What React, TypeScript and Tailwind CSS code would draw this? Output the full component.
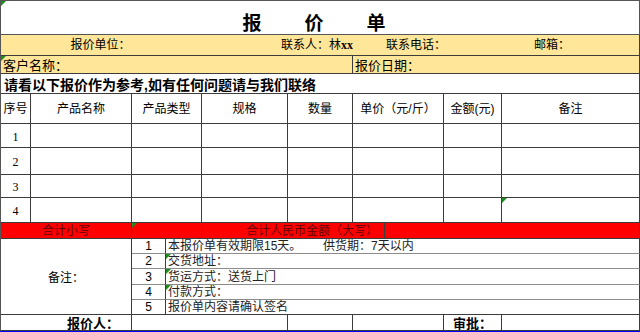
import React from "react";

type Note = { no: number; text: React.ReactNode; flag: boolean; last: boolean };

const NOTES: Note[] = [
  {
    no: 1,
    text: (
      <>
        <span className="inline-block w-[155px]">本报价单有效期限15天。</span>供货期：7天以内
      </>
    ),
    flag: false,
    last: false,
  },
  { no: 2, text: "交货地址：", flag: true, last: false },
  { no: 3, text: "货运方式：送货上门", flag: true, last: false },
  { no: 4, text: "付款方式：", flag: true, last: false },
  { no: 5, text: "报价单内容请确认签名", flag: false, last: true },
];

// base cell: right + bottom grid lines, the table itself draws top + left
const cell = "flex items-center justify-center border-r border-b border-[#3c3c3c] text-[12px] leading-none whitespace-nowrap";

function Flag() {
  return (
    <span className="absolute left-0 top-0 h-0 w-0 border-t-[5px] border-r-[5px] border-t-[#1e8c1e] border-r-transparent" />
  );
}

export default function App() {
  return (
    <div className="w-[640px] h-[332px] bg-white text-black font-['Liberation_Sans','Noto_Sans_CJK_SC',sans-serif] overflow-hidden">
      <div className="grid w-[640px] grid-cols-[30px_101px_34px_36px_86px_65px_32px_59px_58px_138px] grid-rows-[34px_21px_18px_20px_30px_24px_27px_23px_25px_16px_15px_15px_16px_15px_15px_16px] border-t border-l border-[#555]">
        {/* Title */}
        <div className={`${cell} relative col-span-10 items-end gap-[43px] pr-[12px] pb-[1px] text-[19px] font-bold border-[#555]`}>
          <Flag />
          <span>报</span>
          <span>价</span>
          <span>单</span>
        </div>

        {/* Yellow info rows */}
        <div className="col-span-4 flex items-center justify-center border-b border-[#3c3c3c] bg-[#ffe699] pr-[2px] text-[12px] leading-none">
          报价单位：
        </div>
        <div className="col-span-2 flex items-center justify-end border-b border-[#3c3c3c] bg-[#ffe699] text-[12px] leading-none">
          联系人：林<span className="font-['Liberation_Serif'] font-bold">xx</span>
        </div>
        <div className="col-span-2 flex items-center border-b border-[#3c3c3c] bg-[#ffe699] pl-[33px] text-[12px] leading-none whitespace-nowrap">
          联系电话：
        </div>
        <div className="col-span-2 flex items-center border-r border-b border-[#3c3c3c] bg-[#ffe699] pl-[90px] text-[12px] leading-none">
          邮箱：
        </div>

        <div className={`${cell} relative col-span-6 items-end justify-start bg-[#ffe699] pl-[2px] pb-[1px] text-[13px]`}>
          <Flag />
          客户名称：
        </div>
        <div className={`${cell} col-span-4 items-end justify-start bg-[#ffe699] pl-[2px] pb-[1px] text-[13px]`}>
          报价日期：
        </div>

        {/* Notice */}
        <div className={`${cell} col-span-10 items-end justify-start pl-[3px] pb-[1px] text-[14px] font-bold`}>
          请看以下报价作为参考,如有任何问题请与我们联络
        </div>

        {/* Header */}
        <div className={cell}>序号</div>
        <div className={cell}>产品名称</div>
        <div className={`${cell} col-span-2`}>产品类型</div>
        <div className={cell}>规格</div>
        <div className={cell}>数量</div>
        <div className={`${cell} col-span-2`}>单价（元/斤）</div>
        <div className={cell}>金额(元)</div>
        <div className={cell}>备注</div>

        {[1, 2, 3, 4].map((n) => (
          <React.Fragment key={n}>
            <div className={`${cell} pt-[2px] font-['Liberation_Serif',serif]`}>{n}</div>
            <div className={cell} />
            <div className={`${cell} col-span-2`} />
            <div className={cell} />
            <div className={cell} />
            <div className={`${cell} col-span-2`} />
            <div className={cell} />
            <div className={`${cell} relative`}>{n === 4 && <Flag />}</div>
          </React.Fragment>
        ))}

        {/* Totals */}
        <div className={`${cell} col-span-2 bg-[#ff0000] text-[#600000]`}>合计小写</div>
        <div className={`${cell} relative col-span-2 bg-[#ff0000]`}>
          <Flag />
        </div>
        <div className={`${cell} col-span-3 justify-end bg-[#ff0000] pr-[6px] text-[#600000]`}>合计人民币金额（大写）</div>
        <div className={`${cell} col-span-3 bg-[#ff0000]`} />

        {/* Remarks */}
        {NOTES.map((n, i) => (
          <React.Fragment key={n.no}>
            {i === 0 && <div className={`${cell} col-span-2 row-span-5 pt-[2px]`}>备注：</div>}
            <div className={`${cell} ${n.last ? "" : "border-b-[#8c8c8c]"}`}>{n.no}</div>
            <div className={`${cell} relative col-span-7 justify-start pl-[2px] text-[#222] ${n.last ? "" : "border-b-[#8c8c8c]"}`}>
              {n.flag && <Flag />}
              {n.text}
            </div>
          </React.Fragment>
        ))}

        {/* Signatures */}
        <div className={`${cell} col-span-2 items-end justify-end pr-[12px] text-[13px] font-bold`}>报价人：</div>
        <div className={`${cell} col-span-3`} />
        <div className={cell} />
        <div className={`${cell} col-span-2`} />
        <div className={`${cell} items-end text-[13px] font-bold`}>审批：</div>
        <div className={cell} />
      </div>
      <div className="h-[2px] w-[640px] bg-[#0000ff]" />
    </div>
  );
}
